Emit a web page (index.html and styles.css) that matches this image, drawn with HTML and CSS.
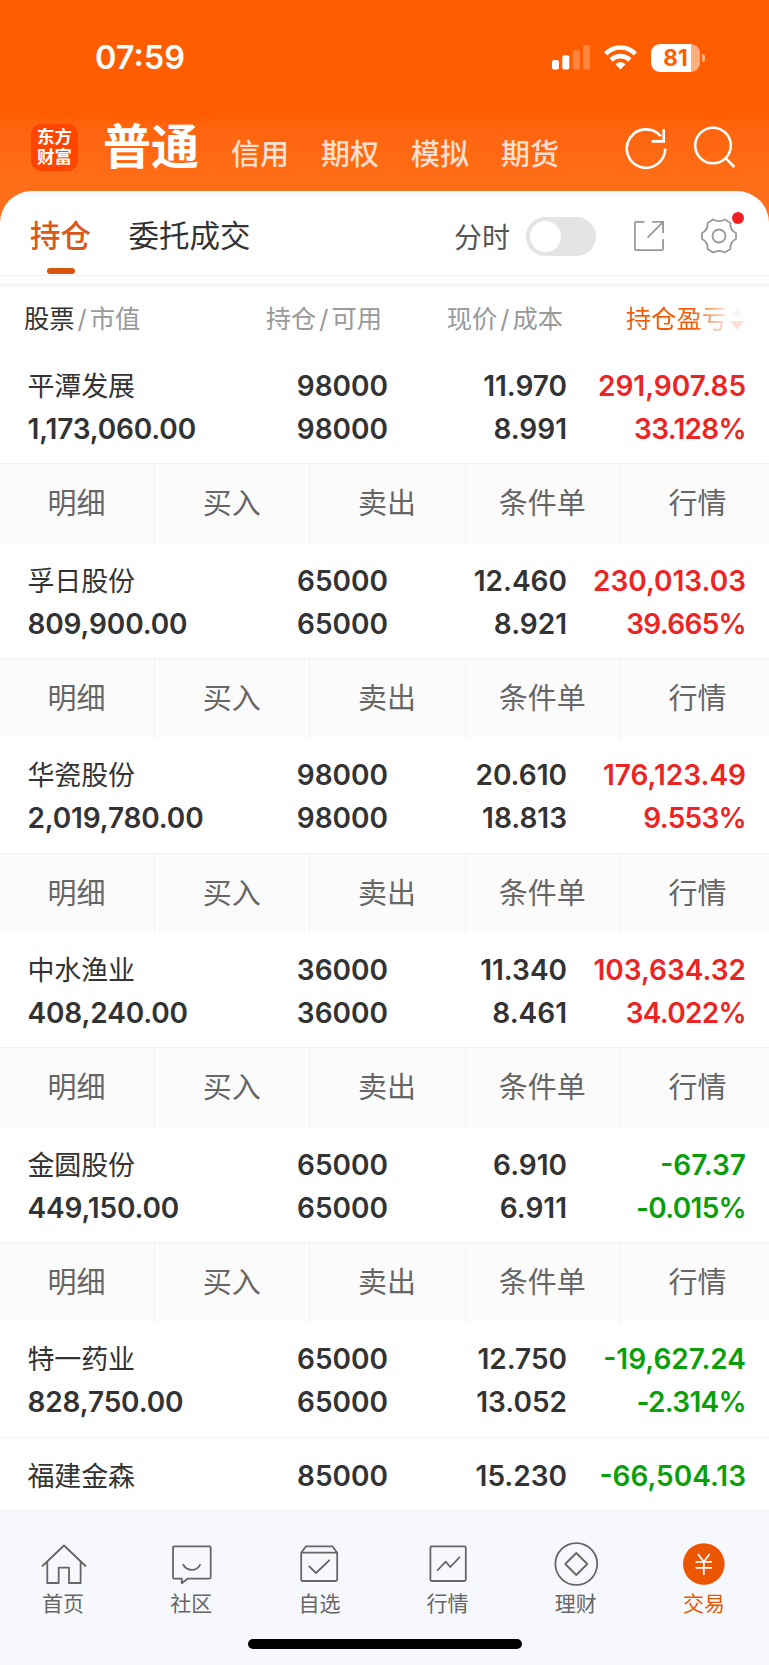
FILE: index.html
```html
<!DOCTYPE html>
<html lang="zh-CN">
<head>
  <meta charset="UTF-8">
  <meta name="viewport" content="width=device-width, initial-scale=1">
  <title>普通交易 - 持仓</title>
  <link rel="stylesheet" href="styles.css">
</head>
<body>

  <div class="status-bar">
    <span class="time">07:59</span>
    <div class="status-icons">
      <svg class="signal" width="38" height="25" viewBox="0 0 38 25" fill="#fff">
        <rect x="0" y="15" width="7" height="9.5" rx="2"/>
        <rect x="10.3" y="10.3" width="7" height="14.2" rx="2"/>
        <rect x="20.8" y="5" width="7" height="19.5" rx="2" opacity=".25"/>
        <rect x="31" y="0" width="7" height="24.5" rx="2" opacity=".25"/>
      </svg>
      <svg class="wifi" width="33" height="25" viewBox="0 0 33 25" fill="none" stroke="#fff" stroke-width="4.6">
        <path d="M1.7 8.8C9.7.4 23.3.4 31.3 8.8"/>
        <path d="M7.2 15C12.4 9.8 20.6 9.8 25.8 15"/>
        <path d="M16.5 24.5l-5-5.2c3-2.6 7-2.6 10 0z" fill="#fff" stroke="none"/>
      </svg>
      <div class="battery"><span>81</span></div>
    </div>
  </div>

  <header class="header">
    <div class="logo"><span>东方</span><span>财富</span></div>
    <h1>普通</h1>
    <nav class="accounts">
      <a>信用</a>
      <a>期权</a>
      <a>模拟</a>
      <a>期货</a>
    </nav>
    <svg class="refresh" width="44" height="44" viewBox="0 0 44 44" fill="none" stroke="#fff" stroke-width="2.6">
      <path d="M41.2 22.6A19.2 19.2 0 1 1 36.7 10.2"/>
      <path d="M39.7 3v12.4H27.6"/>
    </svg>
    <svg class="search" width="44" height="44" viewBox="0 0 44 44" fill="none" stroke="#fff" stroke-width="2.6">
      <circle cx="20" cy="19.5" r="17.8"/>
      <path d="M32.6 32.2L41.4 41"/>
    </svg>
  </header>

  <main class="panel">
    <div class="tabs">
      <a class="tab active">持仓</a>
      <a class="tab">委托成交</a>
      <span class="switch-label">分时</span>
      <span class="switch"></span>
      <svg class="share" width="32" height="32" viewBox="0 0 32 32" fill="none" stroke="#999" stroke-width="1.8">
        <path d="M11.5 1.9H3Q1.9 1.9 1.9 3V29Q1.9 30.1 3 30.1H29Q30.1 30.1 30.1 29V19.2"/>
        <path d="M19.2 1.9H30.1V13M30.1 1.9L14.6 17.6"/>
      </svg>
      <div class="settings">
        <svg width="38" height="38" viewBox="0 0 38 38" fill="none" stroke="#999" stroke-width="1.8" stroke-linejoin="round">
          <path d="M13.2 2.5Q19 5.8 24.8 2.5L30.4 6C30 11.3 31.5 13.8 36 16V22C31.5 24.2 30 26.7 30.4 32L24.8 35.5Q19 32.2 13.2 35.5L7.6 32C8 26.7 6.5 24.2 2 22V16C6.5 13.8 8 11.3 7.6 6Z"/>
          <circle cx="19" cy="19" r="6.5"/>
        </svg>
        <i class="dot"></i>
      </div>
    </div>

    <div class="columns">
      <span><b>股票</b><em>/</em>市值</span>
      <span>持仓<em>/</em>可用</span>
      <span>现价<em>/</em>成本</span>
      <span class="sorted">持仓盈亏</span>
      <svg class="sort" width="14" height="22" viewBox="0 0 14 22">
        <path d="M7 0l7 8.5H0z" fill="#f7f7f8"/>
        <path d="M7 21.5l7-8.5H0z" fill="#ffdfcf"/>
      </svg>
    </div>

    <section class="stock">
      <div class="info up">
        <span class="name">平潭发展</span><span>98000</span><span>11.970</span><span class="profit">291,907.85</span>
        <span>1,173,060.00</span><span>98000</span><span>8.991</span><span class="profit rate">33.128%</span>
      </div>
      <div class="actions"><a>明细</a><a>买入</a><a>卖出</a><a>条件单</a><a>行情</a></div>
    </section>

    <section class="stock">
      <div class="info up">
        <span class="name">孚日股份</span><span>65000</span><span>12.460</span><span class="profit">230,013.03</span>
        <span>809,900.00</span><span>65000</span><span>8.921</span><span class="profit rate">39.665%</span>
      </div>
      <div class="actions"><a>明细</a><a>买入</a><a>卖出</a><a>条件单</a><a>行情</a></div>
    </section>

    <section class="stock">
      <div class="info up">
        <span class="name">华瓷股份</span><span>98000</span><span>20.610</span><span class="profit">176,123.49</span>
        <span>2,019,780.00</span><span>98000</span><span>18.813</span><span class="profit rate">9.553%</span>
      </div>
      <div class="actions"><a>明细</a><a>买入</a><a>卖出</a><a>条件单</a><a>行情</a></div>
    </section>

    <section class="stock">
      <div class="info up">
        <span class="name">中水渔业</span><span>36000</span><span>11.340</span><span class="profit">103,634.32</span>
        <span>408,240.00</span><span>36000</span><span>8.461</span><span class="profit rate">34.022%</span>
      </div>
      <div class="actions"><a>明细</a><a>买入</a><a>卖出</a><a>条件单</a><a>行情</a></div>
    </section>

    <section class="stock">
      <div class="info down">
        <span class="name">金圆股份</span><span>65000</span><span>6.910</span><span class="profit">-67.37</span>
        <span>449,150.00</span><span>65000</span><span>6.911</span><span class="profit rate">-0.015%</span>
      </div>
      <div class="actions"><a>明细</a><a>买入</a><a>卖出</a><a>条件单</a><a>行情</a></div>
    </section>

    <section class="stock closed">
      <div class="info down">
        <span class="name">特一药业</span><span>65000</span><span>12.750</span><span class="profit">-19,627.24</span>
        <span>828,750.00</span><span>65000</span><span>13.052</span><span class="profit rate">-2.314%</span>
      </div>
    </section>

    <section class="stock">
      <div class="info down">
        <span class="name">福建金森</span><span>85000</span><span>15.230</span><span class="profit">-66,504.13</span>
      </div>
    </section>
  </main>

  <footer class="tabbar">
    <nav>
      <a>
        <svg viewBox="0 0 48 48"><path d="M2.5 26L24 5.5 45.5 26M7.3 21.5V43H18.7V27.7H29V43H40.6V21.5"/></svg>
        首页
      </a>
      <a>
        <svg viewBox="0 0 48 48"><path d="M6.5 6.3H41.2Q42.7 6.3 42.7 7.8V37.2Q42.7 38.7 41.2 38.7H19.5L13.8 43.2V38.7H6.5Q5 38.7 5 37.2V7.8Q5 6.3 6.5 6.3Z"/><path d="M15.3 24.8Q18 29.8 23.7 29.8T32 24.8"/></svg>
        社区
      </a>
      <a>
        <svg viewBox="0 0 48 48"><path d="M5.2 12.7H41.2V39.5Q41.2 41 39.7 41H6.7Q5.2 41 5.2 39.5V12.7L10 6.3H36.4L41.2 12.7M13.2 26.3L20 33 33.3 20.3"/></svg>
        自选
      </a>
      <a>
        <svg viewBox="0 0 48 48"><rect x="5.4" y="6.3" width="35.4" height="34.7" rx="1.5"/><path d="M12.7 30L20.7 21.7 25.3 27 34.5 17.3"/></svg>
        行情
      </a>
      <a>
        <svg viewBox="0 0 48 48"><circle cx="23.3" cy="24" r="20.9"/><path d="M23.3 13L34.3 24 23.3 35 12.3 24Z"/></svg>
        理财
      </a>
      <a class="active">
        <svg viewBox="0 0 48 48"><circle cx="22.8" cy="24" r="20.8"/><path d="M17.5 14.8L22.8 21.8 28.1 14.8M22.8 22V34.2M15.3 21.8H30.3M15.3 27.8H30.3"/></svg>
        交易
      </a>
    </nav>
    <div class="home-indicator"></div>
  </footer>

</body>
</html>
```
FILE: styles.css
```css
* {
  box-sizing: border-box;
}
body {
  margin: 0;
  width: 769px;
  height: 1665px;
  overflow: hidden;
  display: flex;
  flex-direction: column;
  font-family: Inter, 'Noto Sans CJK SC', sans-serif;
  background: linear-gradient(#ff5d00 0, #ff5d00 116px, #ff640d 124px, #ff6f19 191px);
  color: #333;
}
svg {
  display: block;
  flex: none;
}

/* status bar */
.status-bar {
  height: 115px;
  padding: 0 65px 0 95px;
  display: flex;
  justify-content: space-between;
  align-items: center;
  color: #fff;
}
.time {
  font-size: 32.5px;
  font-weight: 600;
  line-height: 40px;
}
.status-icons {
  display: flex;
  align-items: center;
}
.wifi {
  margin: 0 14px;
}
.battery {
  position: relative;
  width: 49px;
  height: 28px;
  margin-right: 4px;
  border-radius: 9px;
  background: linear-gradient(90deg, #fff 40px, #ffae80 40px);
}
.battery::after {
  content: '';
  position: absolute;
  left: 51px;
  top: 10px;
  width: 3px;
  height: 8px;
  border-radius: 0 3px 3px 0;
  background: #ffae80;
}
.battery span {
  display: block;
  text-align: center;
  font-size: 22.5px;
  font-weight: 700;
  line-height: 28px;
  color: #ff5d00;
}

/* account header */
.header {
  height: 77px;
  padding: 0 32px 0 31px;
  display: flex;
  align-items: center;
  color: #fff;
}
.logo {
  width: 47px;
  height: 47px;
  margin-top: -13px;
  padding-top: 3px;
  border-radius: 10px;
  background: #ff4500;
  font-size: 17.5px;
  font-weight: 700;
  line-height: 20px;
  text-align: center;
}
.logo span {
  display: block;
}
h1 {
  margin: -14px 0 0 25px;
  font-size: 48px;
  font-weight: 700;
  line-height: 60px;
}
.accounts {
  display: flex;
  gap: 32px;
  margin: 2px 0 0 32px;
  font-size: 29px;
  font-weight: 500;
  line-height: 40px;
  color: #ffdfcd;
}
.refresh {
  margin: -12px 0 0 auto;
}
.search {
  margin: -12px 0 0 25px;
}

/* positions */
.panel {
  flex: 1;
  min-height: 0;
  margin-top: -1px;
  overflow: hidden;
  border-radius: 32px 32px 0 0;
  background: linear-gradient(#f7f8fb 5px, #fff 7px);
}
.tabs {
  height: 85px;
  padding: 6px 31px 0 30px;
  display: flex;
  align-items: center;
  border-bottom: 1px solid #f2f2f4;
}
.tab {
  position: relative;
  margin-right: 37.5px;
  font-size: 30.5px;
  line-height: 44px;
}
.tab.active {
  font-weight: 500;
  color: #d9581a;
}
.tab.active::after {
  content: '';
  position: absolute;
  left: 17px;
  bottom: -16px;
  width: 28px;
  height: 6px;
  border-radius: 3px;
  background: #d9540f;
}
.switch-label {
  margin-left: auto;
  font-size: 28px;
  color: #555;
}
.switch {
  width: 70px;
  height: 39px;
  margin-left: 16px;
  padding: 4px;
  border-radius: 20px;
  background: #e4e4e6;
}
.switch::before {
  content: '';
  display: block;
  width: 31px;
  height: 31px;
  border-radius: 50%;
  background: #fff;
}
.share {
  margin-left: 37px;
}
.settings {
  position: relative;
  margin-left: 35px;
}
.dot {
  position: absolute;
  right: -6px;
  top: -5px;
  width: 12px;
  height: 12px;
  border-radius: 50%;
  background: #f02020;
}
.columns {
  height: 65px;
  margin-top: 7px;
  padding: 3px 25px 0 24px;
  border-top: 4px solid #f5f7fb;
  display: grid;
  grid-template-columns: 190px 168px 181px 164px 14px;
  align-items: center;
  font-size: 25.3px;
  line-height: 36px;
  text-align: right;
  white-space: nowrap;
  color: #999;
}
.columns span:first-child {
  text-align: left;
}
.columns b {
  font-weight: 400;
  color: #333;
}
.columns em {
  margin: 0 3px;
  font-style: normal;
}
.columns .sorted {
  color: transparent;
  background: linear-gradient(90deg, #f25a05 130px, #fff 170px);
  background-clip: text;
  -webkit-background-clip: text;
}
.sort {
  margin-left: 3px;
}
.info {
  height: 115.2px;
  padding: 17px 23px 0 27.5px;
  display: grid;
  grid-template-columns: 180.5px 180px 179px 179px;
  grid-auto-rows: 43px;
  align-items: center;
  font-size: 28px;
  font-weight: 600;
  line-height: 43px;
  text-align: right;
  white-space: nowrap;
}
.info span:nth-child(4n+1) {
  text-align: left;
  letter-spacing: -0.15px;
}
.info .name {
  font-size: 27px;
  font-weight: 400;
}
.info .rate {
  letter-spacing: -0.7px;
}
.up .profit {
  color: #ec2424;
}
.down .profit {
  color: #0a9f0a;
}
.closed .info {
  height: 117px;
  border-bottom: 1px solid #f2f2f2;
}
.actions {
  height: 79.5px;
  display: grid;
  grid-template-columns: 154px repeat(4, 155.3px);
  border-top: 1px solid #f2f2f2;
  background: #fbfbfb;
  font-size: 29px;
  line-height: 80px;
  text-align: center;
  color: #666;
}
.actions a {
  padding-right: 1px;
}
.actions a + a {
  border-left: 1px solid #f2f2f2;
}

/* bottom navigation */
.tabbar {
  height: 156px;
  background: #f7f8fb;
}
.tabbar nav {
  display: flex;
  padding-top: 31px;
}
.tabbar a {
  flex: 1;
  padding-right: 2px;
  font-size: 21px;
  line-height: 32px;
  text-align: center;
  color: #666;
}
.tabbar svg {
  position: relative;
  width: 48px;
  height: 48px;
  left: 1px;
  margin: 0 auto;
  fill: none;
  stroke: #666;
  stroke-width: 1.8;
  stroke-linejoin: round;
  stroke-linecap: round;
}
.tabbar .active {
  color: #ed5600;
}
.tabbar .active circle {
  fill: #ed5600;
  stroke: none;
}
.tabbar .active svg {
  stroke: #fff;
}
.home-indicator {
  width: 274px;
  height: 10px;
  margin: 19px auto 0;
  border-radius: 5px;
  background: #000;
}
```
